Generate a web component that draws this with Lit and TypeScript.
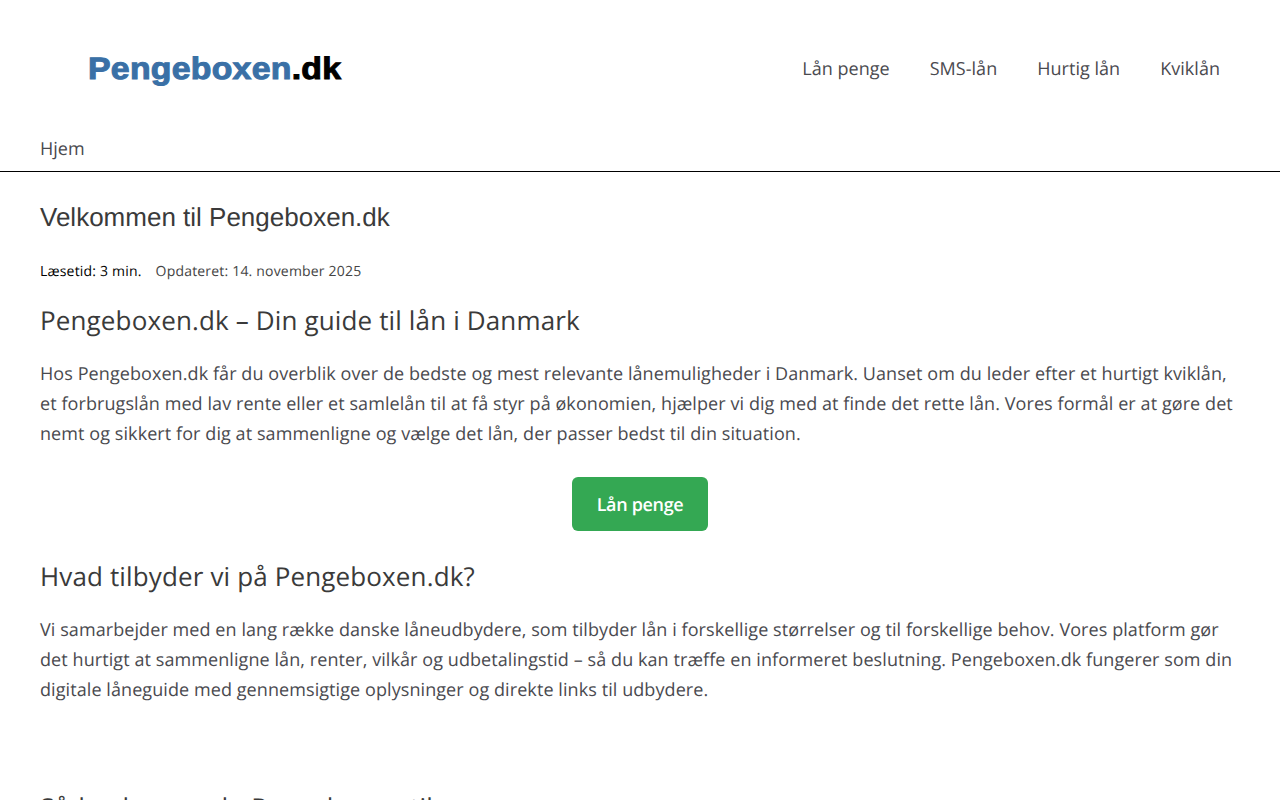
import { html, css, LitElement } from "lit"
import { customElement } from "lit/decorators.js"

@customElement("app-root")
export default class AppRoot extends LitElement {
  static styles = css`
    :host {
      display: block;
      height: 800px;
      overflow: hidden;
      background: #fff;
      color: #4a4a4f;
      font-family: "Open Sans", sans-serif;
      font-size: 18px;
      text-rendering: geometricPrecision;
    }

    a {
      color: inherit;
      text-decoration: none;
    }

    .top {
      display: flex;
      align-items: center;
      justify-content: space-between;
      height: 138px;
      padding: 0 60px 0 40px;
    }

    .logo {
      margin-left: 48px;
      font-family: "Liberation Sans", sans-serif;
      font-size: 31px;
      font-weight: 700;
      letter-spacing: 0.25px;
      color: #000;
      -webkit-text-stroke: 1px currentColor;
      transform: scaleX(1.09);
      transform-origin: left center;
    }

    .logo span {
      color: #3a70a6;
    }

    .menu {
      display: flex;
      gap: 40px;
      letter-spacing: 0.03px;
    }

    .crumbs {
      height: 33px;
      padding: 0 40px;
      border-bottom: 1px solid #000;
      line-height: 22px;
    }

    main {
      padding: 0 40px;
    }

    h1 {
      margin: 29px 0 0;
      font-family: "Liberation Sans", sans-serif;
      font-size: 26px;
      font-weight: 400;
      line-height: 32px;
      color: #3a3a3a;
    }

    .meta {
      display: flex;
      gap: 14px;
      margin-top: 29px;
      font-size: 14px;
      line-height: 20px;
      letter-spacing: 0.19px;
      color: #444;
    }

    .meta b {
      font-weight: 400;
      color: #000;
    }

    h2 {
      margin: 0;
      font-size: 26px;
      font-weight: 400;
      line-height: 36px;
      letter-spacing: 0.14px;
      color: #3a3a3a;
    }

    .meta + h2 {
      margin-top: 20px;
    }

    p {
      margin: 21px 0 0;
      font-size: 18px;
      line-height: 30px;
      letter-spacing: 0.08px;
    }

    .cta {
      display: flex;
      justify-content: center;
      margin: 28px 0 27px;
    }

    .btn {
      padding: 13px 24.5px 11px;
      border-radius: 6px;
      background: #34a853;
      color: #fff;
      font-size: 18px;
      font-weight: 600;
      line-height: 30px;
      letter-spacing: -0.33px;
    }

    .last {
      margin-top: 84px;
    }
  `

  protected render() {
    return html`
      <header class="top">
        <a class="logo" href="#"><span>Pengeboxen</span>.dk</a>
        <nav class="menu">
          <a href="#">Lån penge</a>
          <a href="#">SMS-lån</a>
          <a href="#">Hurtig lån</a>
          <a href="#">Kviklån</a>
        </nav>
      </header>
      <div class="crumbs"><a href="#">Hjem</a></div>
      <main>
        <h1>Velkommen til Pengeboxen.dk</h1>
        <div class="meta"><b>Læsetid: 3 min.</b><span>Opdateret: 14. november 2025</span></div>
        <h2>Pengeboxen.dk – Din guide til lån i Danmark</h2>
        <p>Hos Pengeboxen.dk får du overblik over de bedste og mest relevante lånemuligheder i Danmark. Uanset om du leder efter et hurtigt kviklån, et forbrugslån med lav rente eller et samlelån til at få styr på økonomien, hjælper vi dig med at finde det rette lån. Vores formål er at gøre det nemt og sikkert for dig at sammenligne og vælge det lån, der passer bedst til din situation.</p>
        <div class="cta"><a class="btn" href="#">Lån penge</a></div>
        <h2>Hvad tilbyder vi på Pengeboxen.dk?</h2>
        <p>Vi samarbejder med en lang række danske låneudbydere, som tilbyder lån i forskellige størrelser og til forskellige behov. Vores platform gør det hurtigt at sammenligne lån, renter, vilkår og udbetalingstid – så du kan træffe en informeret beslutning. Pengeboxen.dk fungerer som din digitale låneguide med gennemsigtige oplysninger og direkte links til udbydere.</p>
        <h2 class="last">Sådan bruger du Pengeboxen til</h2>
      </main>
    `
  }
}
